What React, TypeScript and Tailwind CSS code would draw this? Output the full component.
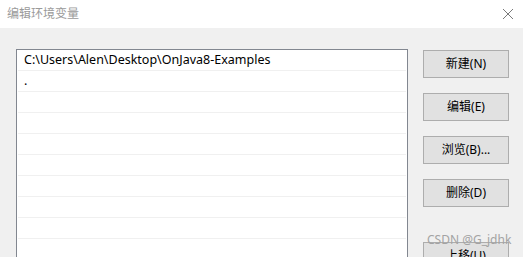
import React from "react";

const font = { fontFamily: '"Noto Sans", "Noto Sans CJK SC", sans-serif' };

const paths = ["C:\\Users\\Alen\\Desktop\\OnJava8-Examples", "."];

const buttons = [
  { label: "新建(N)", extra: "" },
  { label: "编辑(E)", extra: "" },
  { label: "浏览(B)...", extra: "" },
  { label: "删除(D)", extra: "" },
  { label: "上移(U)", extra: "mt-[20px]" },
];

const App: React.FC = () => {
  const rows = Array.from({ length: 12 }, (_, i) => paths[i] ?? "");

  return (
    <div
      className="relative w-[523px] h-[257px] overflow-hidden bg-[#f0f0f0] flex flex-col"
      style={font}
    >
      {/* Title bar */}
      <div className="h-[28px] shrink-0 bg-white flex items-center justify-between pl-[7px] pr-[9px]">
        <span className="text-[12px] text-[#9a9a9a] leading-none">编辑环境变量</span>
        <svg width="12" height="12" viewBox="0 0 12 12" className="text-[#7a7a7a]">
          <path d="M1 1 L11 11 M11 1 L1 11" stroke="currentColor" strokeWidth="1" />
        </svg>
      </div>

      <div className="flex pl-[16px] pt-[21px]">
        {/* Path list */}
        <div className="w-[392px] h-[240px] shrink-0 border border-[#828790] bg-white px-[1px]">
          {rows.map((text, i) => (
            <div
              key={i}
              className="h-[21px] border-b border-[#f0f0f0] pl-[6px] flex items-center text-[12.5px] text-black leading-none"
            >
              {text}
            </div>
          ))}
        </div>

        {/* Buttons */}
        <div className="flex flex-col gap-[15px] ml-[15px] pt-[1px]">
          {buttons.map((b) => (
            <button
              key={b.label}
              className={`w-[86px] h-[28px] shrink-0 border border-[#adadad] bg-[#e1e1e1] text-[12px] text-black flex items-center justify-center ${b.extra}`}
            >
              {b.label}
            </button>
          ))}
        </div>
      </div>

      {/* Watermark */}
      <span className="absolute left-[427px] top-[234px] text-[12px] text-[#a3a3a3] leading-none">
        CSDN @G_jdhk
      </span>
    </div>
  );
};

export default App;
